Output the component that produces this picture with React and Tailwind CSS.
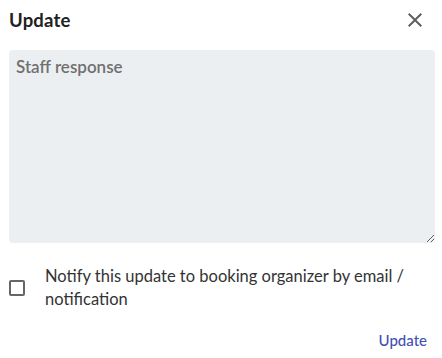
import React, { useState } from "react";
import { MdClose } from "react-icons/md";

const App = () => {
  const [response, setResponse] = useState("");
  const [notify, setNotify] = useState(false);

  return (
    <div className="w-[442px] h-[358px] bg-white pl-[9px] pr-[7px] font-['Lato',sans-serif] overflow-hidden">
      <div className="flex items-start justify-between pt-[7px] h-[50px]">
        <h2 className="text-[18.5px] font-bold leading-[26px] text-[#212121] tracking-[0.2px]">
          Update
        </h2>
        <button className="mt-[1px] mr-[8px] text-[#5f5f5f]">
          <MdClose size={24} />
        </button>
      </div>
      <textarea
        value={response}
        onChange={(e) => setResponse(e.target.value)}
        placeholder="Staff response"
        className="block w-full h-[193px] rounded-[4px] bg-[#eceff1] px-[7px] py-[4px] text-[17px] text-[#333] outline-none resize-y placeholder:text-[#707070] placeholder:font-semibold"
      />
      <div className="flex items-center mt-[22px]">
        <button
          onClick={() => setNotify((prev) => !prev)}
          className="w-[16px] h-[16px] shrink-0 rounded-[2px] border-2 border-[#666]"
        >
          {notify && <span className="block w-full h-full bg-[#666]" />}
        </button>
        <p className="ml-[20px] max-w-[372px] text-[16.5px] leading-[23px] text-[#333]">
          Notify this update to booking organizer by email / notification
        </p>
      </div>
      <div className="flex justify-end mt-[18px]">
        <button className="px-[8px] text-[15px] font-medium text-[#3f51b5]">
          Update
        </button>
      </div>
    </div>
  );
};

export default App;
